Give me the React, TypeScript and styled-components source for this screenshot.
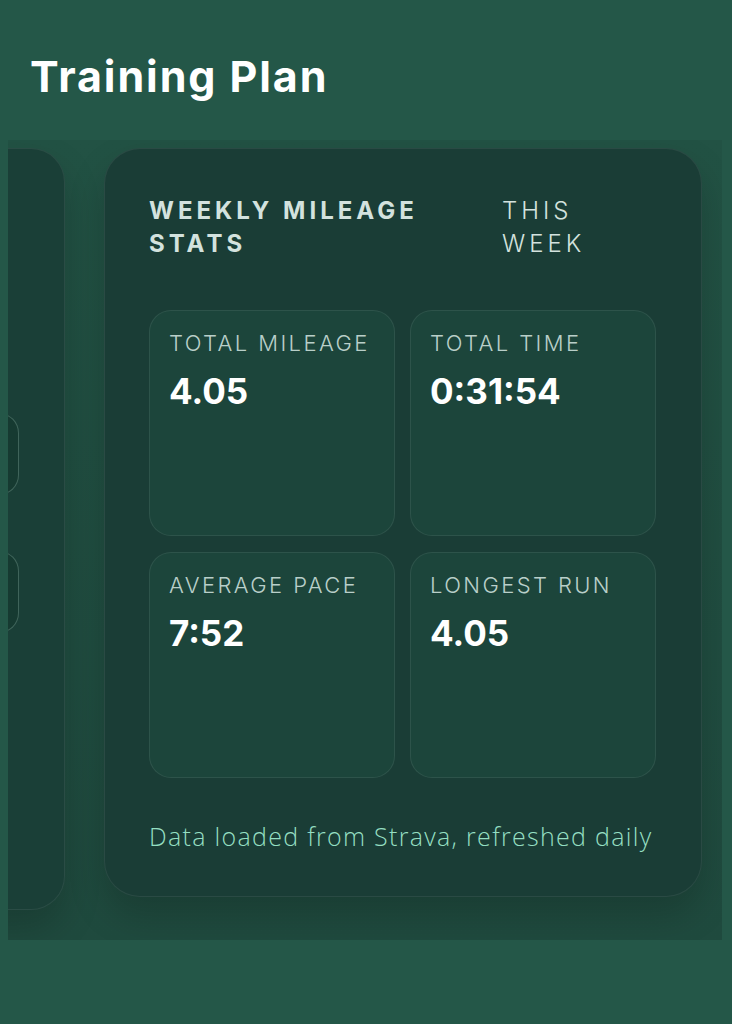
import { useLayoutEffect, useRef } from "react";
import styled, { createGlobalStyle } from "styled-components";

const stats = [
  { label: "Total Mileage", value: "4.05" },
  { label: "Total Time", value: "0:31:54" },
  { label: "Average Pace", value: "7:52" },
  { label: "Longest Run", value: "4.05" },
];

export default function App() {
  const scrollRef = useRef<HTMLDivElement>(null);
  const activeRef = useRef<HTMLDivElement>(null);

  // carousel opens on the weekly stats slide, with the previous slide peeking in
  useLayoutEffect(() => {
    if (scrollRef.current && activeRef.current) {
      scrollRef.current.scrollLeft = activeRef.current.offsetLeft - 96;
    }
  }, []);

  return (
    <>
      <GlobalStyle />
      <Page>
        <Title>Training Plan</Title>
        <Carousel ref={scrollRef}>
          <Track>
            <PrevCard>
              <WorkoutRow />
              <WorkoutRow />
            </PrevCard>
            <Card ref={activeRef}>
              <CardHeader>
                <CardTitle>Weekly Mileage Stats</CardTitle>
                <Period>This Week</Period>
              </CardHeader>
              <StatGrid>
                {stats.map((stat) => (
                  <StatBox key={stat.label}>
                    <StatLabel>{stat.label}</StatLabel>
                    <StatValue>{stat.value}</StatValue>
                  </StatBox>
                ))}
              </StatGrid>
              <Footnote>Data loaded from Strava, refreshed daily</Footnote>
            </Card>
          </Track>
        </Carousel>
      </Page>
    </>
  );
}

const GlobalStyle = createGlobalStyle`
  html, body {
    margin: 0;
    padding: 0;
    background: #245748;
  }
  body {
    font-family: Inter, "Liberation Sans", sans-serif;
    color: #ffffff;
  }
`;

const Page = styled.div`
  min-height: 1024px;
  background: #245748;
  padding-top: 49px;
`;

const Title = styled.h1`
  margin: 0 0 0 30px;
  font-size: 43px;
  font-weight: 700;
  line-height: 54px;
  letter-spacing: 1.9px;
  color: #ffffff;
`;

const Carousel = styled.div`
  position: relative;
  margin: 37px 10px 0 8px;
  overflow-x: auto;
  scrollbar-width: none;
  background: linear-gradient(180deg, #225244 0%, #1f4a3e 100%);
  &::-webkit-scrollbar {
    display: none;
  }
`;

const Track = styled.div`
  display: flex;
  align-items: flex-start;
  gap: 39px;
  width: max-content;
  padding: 8px 20px 30px 0;
`;

const PrevCard = styled.div`
  box-sizing: border-box;
  width: 599px;
  height: 762px;
  flex-shrink: 0;
  display: flex;
  flex-direction: column;
  gap: 56px;
  padding: 264px 45px 0;
  background: #1a3f37;
  border: 1px solid rgba(255, 255, 255, 0.07);
  border-radius: 34px;
  box-shadow: 0 18px 36px rgba(0, 0, 0, 0.18);
`;

const WorkoutRow = styled.div`
  height: 80px;
  background: #163a31;
  border: 1.5px solid rgba(160, 200, 185, 0.3);
  border-radius: 20px;
`;

const Card = styled.div`
  box-sizing: border-box;
  width: 598px;
  flex-shrink: 0;
  padding: 45px 45px 44px 44px;
  background: #1a3d36;
  border: 1px solid rgba(255, 255, 255, 0.07);
  border-radius: 36px;
  box-shadow: 0 18px 36px rgba(0, 0, 0, 0.18);
`;

const CardHeader = styled.div`
  display: grid;
  grid-template-columns: 353px 1fr;
  align-items: start;
`;

const CardTitle = styled.h2`
  margin: 0;
  max-width: 300px;
  font-size: 24px;
  line-height: 33px;
  font-weight: 700;
  letter-spacing: 4px;
  text-transform: uppercase;
  color: #d3e2de;
`;

const Period = styled.div`
  max-width: 110px;
  font-size: 24px;
  line-height: 33px;
  font-weight: 300;
  letter-spacing: 4px;
  text-transform: uppercase;
  color: #d3e2de;
`;

const StatGrid = styled.div`
  display: grid;
  grid-template-columns: 1fr 1fr;
  gap: 16px 15px;
  margin-top: 50px;
`;

const StatBox = styled.div`
  box-sizing: border-box;
  height: 226px;
  padding: 18px 19px;
  background: #1c453b;
  border: 1.5px solid rgba(255, 255, 255, 0.08);
  border-radius: 22px;
`;

const StatLabel = styled.div`
  font-size: 22px;
  line-height: 28px;
  font-weight: 300;
  letter-spacing: 2.4px;
  text-transform: uppercase;
  color: #b9cfc9;
`;

const StatValue = styled.div`
  margin-top: 13px;
  font-size: 35px;
  line-height: 42px;
  font-weight: 700;
  color: #ffffff;
`;

const Footnote = styled.p`
  margin: 42px 0 0;
  font-family: "Open Sans", "Noto Sans", sans-serif;
  font-size: 25px;
  line-height: 32px;
  font-weight: 300;
  letter-spacing: 1.3px;
  white-space: nowrap;
  color: #95dfc2;
`;
